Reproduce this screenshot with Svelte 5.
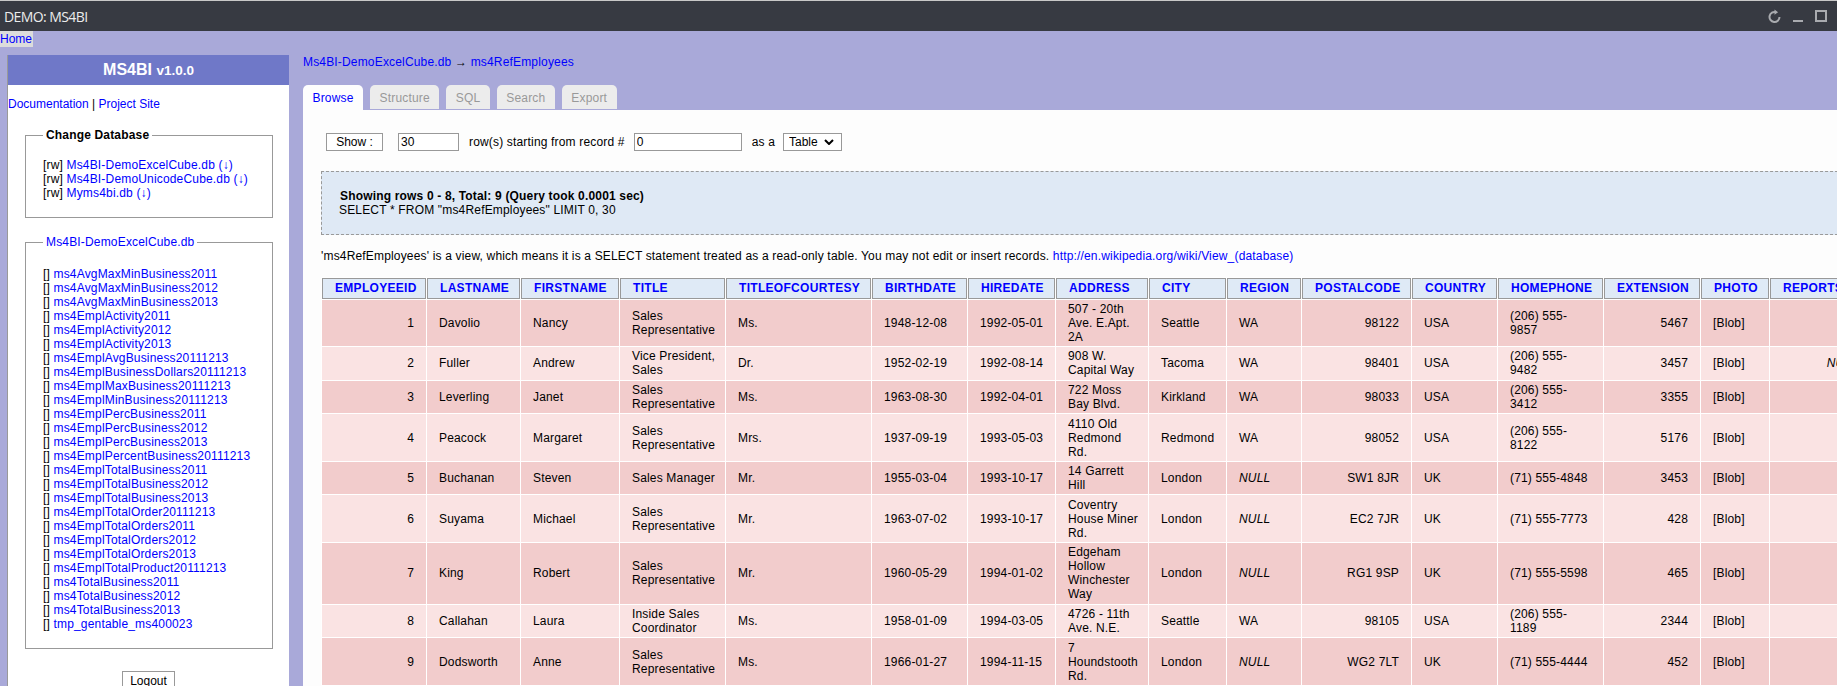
<script>
  const databases = [
    'Ms4BI-DemoExcelCube.db',
    'Ms4BI-DemoUnicodeCube.db',
    'Myms4bi.db',
  ]

  const tables = [
    'ms4AvgMaxMinBusiness2011', 'ms4AvgMaxMinBusiness2012', 'ms4AvgMaxMinBusiness2013',
    'ms4EmplActivity2011', 'ms4EmplActivity2012', 'ms4EmplActivity2013',
    'ms4EmplAvgBusiness20111213', 'ms4EmplBusinessDollars20111213',
    'ms4EmplMaxBusiness20111213', 'ms4EmplMinBusiness20111213',
    'ms4EmplPercBusiness2011', 'ms4EmplPercBusiness2012', 'ms4EmplPercBusiness2013',
    'ms4EmplPercentBusiness20111213',
    'ms4EmplTotalBusiness2011', 'ms4EmplTotalBusiness2012', 'ms4EmplTotalBusiness2013',
    'ms4EmplTotalOrder20111213',
    'ms4EmplTotalOrders2011', 'ms4EmplTotalOrders2012', 'ms4EmplTotalOrders2013',
    'ms4EmplTotalProduct20111213',
    'ms4TotalBusiness2011', 'ms4TotalBusiness2012', 'ms4TotalBusiness2013',
    'tmp_gentable_ms400023',
  ]

  const tabs = ['Browse', 'Structure', 'SQL', 'Search', 'Export']

  // name, column width, right aligned
  const columns = [
    ['EMPLOYEEID', 104, true], ['LASTNAME', 93, false], ['FIRSTNAME', 98, false],
    ['TITLE', 105, false], ['TITLEOFCOURTESY', 145, false], ['BIRTHDATE', 95, false],
    ['HIREDATE', 87, false], ['ADDRESS', 92, false], ['CITY', 77, false],
    ['REGION', 74, false], ['POSTALCODE', 109, true], ['COUNTRY', 85, false],
    ['HOMEPHONE', 105, false], ['EXTENSION', 96, true], ['PHOTO', 68, false],
    ['REPORTSTO', 100, true],
  ]

  const rows = [
    [1, 'Davolio', 'Nancy', 'Sales Representative', 'Ms.', '1948-12-08', '1992-05-01', '507 - 20th Ave. E.Apt. 2A', 'Seattle', 'WA', '98122', 'USA', '(206) 555-9857', 5467, '[Blob]', 2],
    [2, 'Fuller', 'Andrew', 'Vice President, Sales', 'Dr.', '1952-02-19', '1992-08-14', '908 W. Capital Way', 'Tacoma', 'WA', '98401', 'USA', '(206) 555-9482', 3457, '[Blob]', null],
    [3, 'Leverling', 'Janet', 'Sales Representative', 'Ms.', '1963-08-30', '1992-04-01', '722 Moss Bay Blvd.', 'Kirkland', 'WA', '98033', 'USA', '(206) 555-3412', 3355, '[Blob]', 2],
    [4, 'Peacock', 'Margaret', 'Sales Representative', 'Mrs.', '1937-09-19', '1993-05-03', '4110 Old Redmond Rd.', 'Redmond', 'WA', '98052', 'USA', '(206) 555-8122', 5176, '[Blob]', 2],
    [5, 'Buchanan', 'Steven', 'Sales Manager', 'Mr.', '1955-03-04', '1993-10-17', '14 Garrett Hill', 'London', null, 'SW1 8JR', 'UK', '(71) 555-4848', 3453, '[Blob]', 2],
    [6, 'Suyama', 'Michael', 'Sales Representative', 'Mr.', '1963-07-02', '1993-10-17', 'Coventry House Miner Rd.', 'London', null, 'EC2 7JR', 'UK', '(71) 555-7773', 428, '[Blob]', 5],
    [7, 'King', 'Robert', 'Sales Representative', 'Mr.', '1960-05-29', '1994-01-02', 'Edgeham Hollow Winchester Way', 'London', null, 'RG1 9SP', 'UK', '(71) 555-5598', 465, '[Blob]', 5],
    [8, 'Callahan', 'Laura', 'Inside Sales Coordinator', 'Ms.', '1958-01-09', '1994-03-05', '4726 - 11th Ave. N.E.', 'Seattle', 'WA', '98105', 'USA', '(206) 555-1189', 2344, '[Blob]', 2],
    [9, 'Dodsworth', 'Anne', 'Sales Representative', 'Ms.', '1966-01-27', '1994-11-15', '7 Houndstooth Rd.', 'London', null, 'WG2 7LT', 'UK', '(71) 555-4444', 452, '[Blob]', 5],
  ]

  const tableWidth = columns.reduce((sum, c) => sum + c[1] + 1, 1)
</script>

<div class="window">
  <header class="titlebar">
    <span class="title">DEMO: MS4BI</span>
    <div class="controls">
      <svg width="13" height="15" viewBox="0.5 0 13 15" fill="none" stroke="#a9abaf" stroke-width="2">
        <path d="M8.5 3.2A5 5 0 1 0 12 8" />
        <path d="M7 0.6 L10.6 3.2 L7 5.8 Z" fill="#a9abaf" stroke="none" />
      </svg>
      <svg class="min" width="10" height="2" viewBox="0 0 10 2"><rect width="10" height="2" fill="#a9abaf" /></svg>
      <svg width="12" height="12" viewBox="0 0 12 12" fill="none" stroke="#a9abaf" stroke-width="2"><rect x="1" y="1" width="10" height="10" /></svg>
    </div>
  </header>

  <nav class="homebar"><a href="#home">Home</a></nav>

  <div class="layout">
    <aside class="sidebar">
      <h1 class="brand">MS4BI <small>v1.0.0</small></h1>
      <p class="doclinks"><a href="#docs">Documentation</a> | <a href="#site">Project Site</a></p>

      <fieldset class="dbs">
        <legend class="bold-legend">Change Database</legend>
        {#each databases as db}
          <div>[rw] <a href="#db">{db}</a> <a href="#dl">(↓)</a></div>
        {/each}
      </fieldset>

      <fieldset class="tables">
        <legend><a href="#db">Ms4BI-DemoExcelCube.db</a></legend>
        {#each tables as t}
          <div>[] <a href="#t">{t}</a></div>
        {/each}
      </fieldset>

      <div class="logout"><button>Logout</button></div>
    </aside>

    <main class="content">
      <div class="crumbs"><a href="#db">Ms4BI-DemoExcelCube.db</a> → <a href="#t">ms4RefEmployees</a></div>

      <ul class="tabs">
        {#each tabs as tab, i}
          <li class:active={i === 0}>{tab}</li>
        {/each}
      </ul>

      <div class="panel">
        <form class="browse-form">
          <button type="button" class="show">Show :</button>
          <input class="count" value="30" />
          <span class="lbl">row(s) starting from record #</span>
          <input class="start" value="0" />
          <span class="lbl">as a</span>
          <select><option>Table</option></select>
        </form>

        <div class="info">
          <b>Showing rows 0 - 8, Total: 9 (Query took 0.0001 sec)</b><br />
          SELECT * FROM "ms4RefEmployees" LIMIT 0, 30
        </div>

        <p class="note">'ms4RefEmployees' is a view, which means it is a SELECT statement treated as a read-only table. You may not edit or insert records. <a href="#wiki">http://en.wikipedia.org/wiki/View_(database)</a></p>

        <table style="width: {tableWidth}px">
          <colgroup>
            {#each columns as c}
              <col style="width: {c[1]}px" />
            {/each}
          </colgroup>
          <thead>
            <tr>
              {#each columns as c}
                <th>{c[0]}</th>
              {/each}
            </tr>
          </thead>
          <tbody>
            {#each rows as row, r}
              <tr class={r % 2 === 0 ? 'odd' : 'even'}>
                {#each row as cell, i}
                  <td class:num={columns[i][2]}>
                    {#if cell === null}<i>NULL</i>{:else}{cell}{/if}
                  </td>
                {/each}
              </tr>
            {/each}
          </tbody>
        </table>
      </div>
    </main>
  </div>
</div>

<style>
  :global(body) {
    margin: 0;
    background: #a9a9d9;
  }
  .window {
    width: 1837px;
    height: 686px;
    overflow: hidden;
    display: flex;
    flex-direction: column;
    background: #a9a9d9;
    font-family: 'Liberation Sans', Arial, sans-serif;
    font-size: 12px;
    letter-spacing: 0.17px;
    color: #000;
  }
  a {
    color: #0000ff;
    text-decoration: none;
  }
  .titlebar {
    height: 30px;
    flex: none;
    display: flex;
    align-items: center;
    justify-content: space-between;
    background: #373a42;
    border-top: 1px solid #c8c8c8;
    color: #ececec;
    padding: 0 10px 0 4px;
  }
  .title {
    font-family: 'Open Sans', sans-serif;
    font-size: 14px;
    letter-spacing: -0.58px;
  }
  .controls {
    display: flex;
    align-items: center;
    gap: 12px;
  }
  .min {
    margin-top: 9px;
  }
  .homebar {
    flex: none;
    height: 16px;
    line-height: 16px;
    letter-spacing: 0;
  }
  .homebar a {
    display: inline-block;
    background: #dcdcdc;
    padding-right: 1px;
  }
  .layout {
    flex: none;
    display: flex;
    align-items: flex-start;
    padding: 8px 0 0 7px;
  }
  .sidebar {
    flex: none;
    width: 282px;
    height: 700px;
    background: #fff;
    border-left: 1px solid #999;
    box-sizing: border-box;
  }
  .brand {
    margin: 0;
    height: 30px;
    line-height: 30px;
    background: #6f78c8;
    color: #fff;
    text-align: center;
    font-size: 16px;
    font-weight: bold;
    letter-spacing: 0;
  }
  .brand small {
    font-size: 13.5px;
  }
  .doclinks {
    margin: 12px 0 0 0;
    letter-spacing: 0;
  }
  fieldset {
    margin: 0 16px 0 17px;
    padding: 0 0 0 17px;
    border: 1px solid #999;
  }
  legend {
    padding: 0 3px;
  }
  .bold-legend {
    font-weight: bold;
  }
  .dbs {
    margin-top: 17px;
    padding-top: 16px;
    padding-bottom: 17px;
  }
  .tables {
    margin-top: 17px;
    padding-top: 18px;
    padding-bottom: 17px;
  }
  .logout {
    margin-top: 22px;
    text-align: center;
  }
  .logout button {
    font: inherit;
    letter-spacing: 0;
    width: 53px;
    height: 20px;
    padding: 0;
    background: #fff;
    border: 1px solid #999;
  }
  .content {
    flex: none;
    margin-left: 14px;
    width: 1600px;
  }
  .crumbs {
    height: 30px;
    line-height: 14px;
  }
  .tabs {
    display: flex;
    gap: 7px;
    height: 25px;
    margin: 0;
    padding: 0;
    list-style: none;
  }
  .tabs li {
    height: 24px;
    line-height: 26px;
    padding: 0 9.5px;
    background: #ececec;
    color: #999;
    border-radius: 5px 5px 0 0;
  }
  .tabs li.active {
    height: 25px;
    background: #fdfdfd;
    color: #0000ff;
  }
  .panel {
    background: #fdfdfd;
    height: 620px;
    padding: 23px 0 0 18px;
  }
  .browse-form {
    display: flex;
    align-items: center;
    margin-left: 5px;
    height: 18px;
  }
  .show {
    font: inherit;
    width: 57px;
    height: 18px;
    padding: 0;
    background: #fff;
    border: 1px solid #999;
    margin-right: 15px;
  }
  input {
    font: inherit;
    box-sizing: border-box;
    height: 18px;
    padding: 0 2px;
    border: 1px solid #999;
    background: #fff;
    outline: none;
  }
  .count {
    width: 61px;
    margin-right: 10px;
  }
  .start {
    width: 108px;
    margin: 0 10px 0 9px;
  }
  select {
    font: inherit;
    box-sizing: border-box;
    width: 59px;
    height: 18px;
    margin-left: 8px;
    padding: 0 0 0 5px;
    border: 1px solid #999;
    border-radius: 0;
    appearance: none;
    background: #fff url("data:image/svg+xml,%3Csvg xmlns='http://www.w3.org/2000/svg' width='10' height='6' viewBox='0 0 10 6'%3E%3Cpath d='M1 1l4 4 4-4' fill='none' stroke='%23000' stroke-width='2'/%3E%3C/svg%3E") no-repeat right 7px center;
  }
  .info {
    margin-top: 20px;
    height: 64px;
    box-sizing: border-box;
    padding: 17px;
    background: #dfe9f5;
    border: 1px dashed #999;
  }
  .info b {
    margin-left: 1px;
  }
  .note {
    margin: 14px 0 0;
    line-height: 14px;
  }
  table {
    margin: 14px 0 0 0;
    table-layout: fixed;
    border-collapse: separate;
    border-spacing: 1px;
    background: #fff;
  }
  th {
    padding: 2px 12px 2.5px;
    background: #dfeaf6;
    border: 1px solid #999;
    color: #0000ff;
    font-weight: bold;
    letter-spacing: 0.3px;
    text-align: left;
    white-space: nowrap;
    overflow: hidden;
  }
  td {
    padding: 2.3px 8px 2.3px 12px;
    vertical-align: middle;
  }
  td:nth-child(13) {
    padding-right: 15px;
  }
  td.num {
    padding-right: 12px;
    text-align: right;
  }
  .odd td {
    background: #f2cccc;
  }
  .even td {
    background: #fae3e3;
  }
</style>
